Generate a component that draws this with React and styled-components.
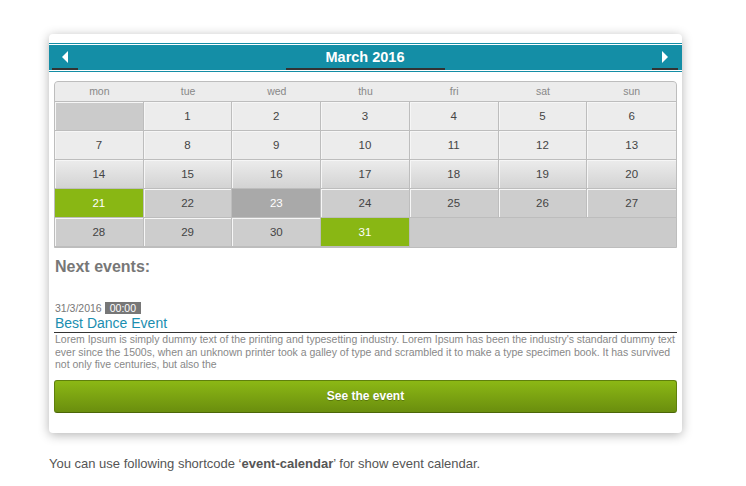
import React from "react";
import styled, { createGlobalStyle } from "styled-components";

const GlobalStyle = createGlobalStyle`
  html, body {
    margin: 0;
    padding: 0;
    background: #fff;
    font-family: "Liberation Sans", Arial, sans-serif;
  }
`;

const Page = styled.div`
  padding: 34px 0 0 49px;
`;

const Card = styled.div`
  width: 633px;
  box-sizing: border-box;
  background: #fff;
  border-radius: 4px;
  box-shadow: 0 2px 11px rgba(0, 0, 0, 0.3);
  padding: 9px 0 20px;
`;

const Header = styled.div`
  border-top: 1px solid #148ea6;
  border-bottom: 1px solid #148ea6;
  padding: 1px 0;
`;

const Bar = styled.div`
  display: flex;
  align-items: stretch;
  justify-content: space-between;
  height: 25px;
  background: #148ea6;
  padding: 0 4px 0 3px;
`;

const NavButton = styled.div`
  width: 26px;
  display: flex;
  align-items: center;
  justify-content: center;
  border-bottom: 2px solid #333;
  box-sizing: border-box;
  cursor: pointer;
`;

const Arrow = styled.span`
  width: 0;
  height: 0;
  margin-top: 1px;
  border-top: 6px solid transparent;
  border-bottom: 6px solid transparent;
  ${(p) =>
    p.dir === "left"
      ? "border-right: 6px solid #fff;"
      : "border-left: 6px solid #fff;"}
`;

const Title = styled.div`
  display: flex;
  align-items: center;
  justify-content: center;
  padding: 0 40px;
  min-width: 120px;
  color: #fff;
  font-weight: bold;
  font-size: 14.5px;
  border-bottom: 2px solid #333;
  box-sizing: border-box;
`;

const Body = styled.div`
  padding: 9px 5px 0;
`;

const Grid = styled.div`
  display: grid;
  grid-template-columns: repeat(7, 1fr);
  border: 1px solid #bdbdbd;
  border-radius: 4px 4px 0 0;
  overflow: hidden;
  background: #cbcbcb;
`;

const DayName = styled.div`
  height: 19px;
  line-height: 19px;
  text-align: center;
  font-size: 10.5px;
  color: #888;
  background: #ececec;
  border-bottom: 1px solid #bdbdbd;
`;

const tones = {
  light: "#ececec",
  mid: "linear-gradient(#ececec, #d3d3d3)",
  dark: "#cdcdcd",
  empty: "#cbcbcb",
  selected: "#a9a9a9",
  active: "#89b714",
};

const Cell = styled.div`
  height: 28px;
  line-height: 28px;
  text-align: center;
  font-size: 11.5px;
  color: ${(p) => (p.tone === "selected" || p.tone === "active" ? "#fff" : "#444")};
  background: ${(p) => tones[p.tone]};
  border-right: ${(p) => (p.last ? "none" : "1px solid #bdbdbd")};
  border-bottom: 1px solid #bdbdbd;
  box-shadow: ${(p) =>
    p.tone === "active" || p.tone === "selected" ? "none" : "inset 1px 1px 0 #f6f6f6"};
`;

const Filler = styled.div`
  grid-column: span ${(p) => p.span};
  background: #cbcbcb;
`;

const Heading = styled.h3`
  margin: 9px 0 0 1px;
  font-size: 16px;
  font-weight: bold;
  color: #777;
  line-height: 20px;
`;

const EventMeta = styled.div`
  margin: 25px 0 0 1px;
  font-size: 10.5px;
  color: #777;
  display: flex;
  align-items: center;
  gap: 3px;
  line-height: 12px;
`;

const Time = styled.span`
  background: #777;
  color: #fff;
  padding: 0 5px;
  line-height: 12px;
`;

const EventTitle = styled.div`
  font-size: 14px;
  color: #1a8eb0;
  padding: 1px 0 1px 1px;
  border-bottom: 1px solid #333;
  line-height: 16px;
`;

const Excerpt = styled.p`
  margin: 0 0 0 1px;
  font-size: 10.5px;
  line-height: 12.5px;
  color: #888;
`;

const Button = styled.div`
  margin-top: 9px;
  height: 33px;
  box-sizing: border-box;
  border-radius: 3px;
  border: 1px solid #5f800c;
  border-bottom-color: #4b6608;
  background: linear-gradient(#8cb815, #6a8e0e);
  color: #fff;
  font-weight: bold;
  font-size: 12px;
  display: flex;
  align-items: center;
  justify-content: center;
  text-shadow: 0 1px 0 rgba(0, 0, 0, 0.25);
`;

const Note = styled.p`
  margin: 23px 0 0;
  font-size: 13px;
  color: #555;
`;

const days = ["mon", "tue", "wed", "thu", "fri", "sat", "sun"];

const weeks = [
  [null, 1, 2, 3, 4, 5, 6],
  [7, 8, 9, 10, 11, 12, 13],
  [14, 15, 16, 17, 18, 19, 20],
  [21, 22, 23, 24, 25, 26, 27],
  [28, 29, 30, 31],
];

const rowTone = ["light", "light", "mid", "dark", "dark"];

function toneFor(day, row) {
  if (day === null) return "empty";
  if (day === 21 || day === 31) return "active";
  if (day === 23) return "selected";
  return rowTone[row];
}

export default function App() {
  return (
    <>
      <GlobalStyle />
      <Page>
        <Card>
          <Header>
            <Bar>
              <NavButton>
                <Arrow dir="left" />
              </NavButton>
              <Title>March 2016</Title>
              <NavButton>
                <Arrow dir="right" />
              </NavButton>
            </Bar>
          </Header>
          <Body>
            <Grid>
              {days.map((d) => (
                <DayName key={d}>{d}</DayName>
              ))}
              {weeks.map((week, r) => (
                <React.Fragment key={r}>
                  {week.map((day, c) => (
                    <Cell key={c} tone={toneFor(day, r)} last={c === 6}>
                      {day}
                    </Cell>
                  ))}
                  {week.length < 7 && <Filler span={7 - week.length} />}
                </React.Fragment>
              ))}
            </Grid>
            <Heading>Next events:</Heading>
            <EventMeta>
              31/3/2016 <Time>00:00</Time>
            </EventMeta>
            <EventTitle>Best Dance Event</EventTitle>
            <Excerpt>
              Lorem Ipsum is simply dummy text of the printing and typesetting industry. Lorem
              Ipsum has been the industry's standard dummy text ever since the 1500s, when an
              unknown printer took a galley of type and scrambled it to make a type specimen book.
              It has survived not only five centuries, but also the
            </Excerpt>
            <Button>See the event</Button>
          </Body>
        </Card>
        <Note>
          You can use following shortcode ‘<b>event-calendar</b>’ for show event calendar.
        </Note>
      </Page>
    </>
  );
}
